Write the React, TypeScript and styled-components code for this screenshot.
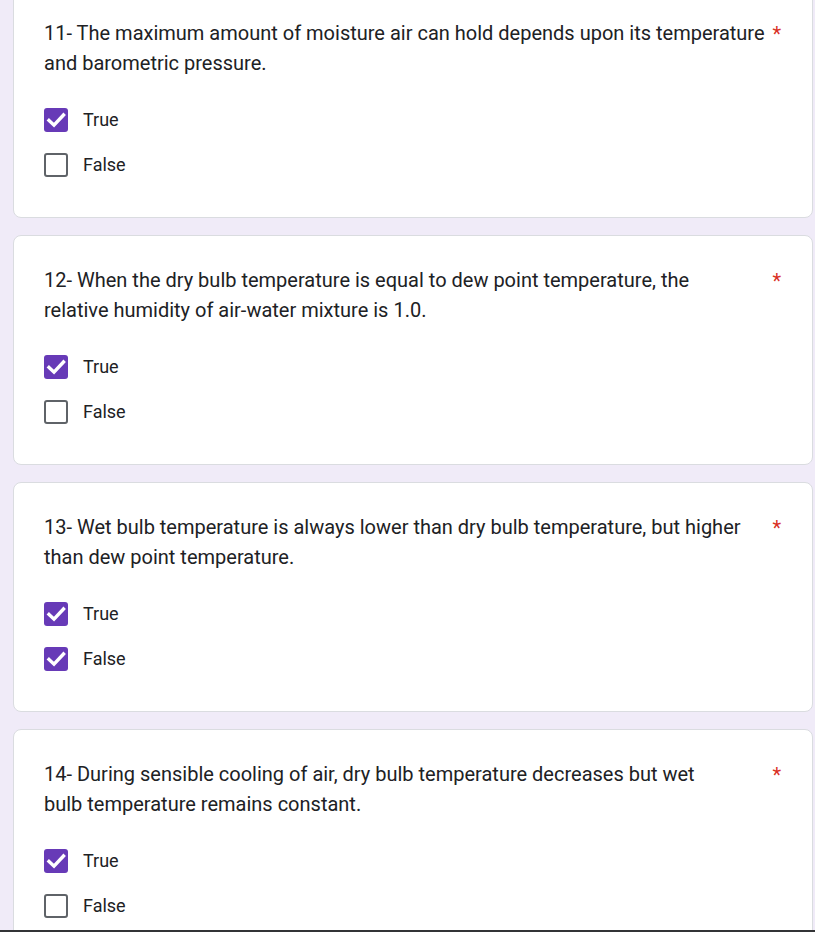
import React from 'react';
import styled, { createGlobalStyle } from 'styled-components';

const GlobalStyle = createGlobalStyle`
  html, body {
    margin: 0;
    padding: 0;
    background: #f0ebf8;
    font-family: Roboto, "Noto Sans", Arial, sans-serif;
    overflow: hidden;
  }
`;

const Page = styled.div`
  height: 932px;
  box-sizing: border-box;
  padding: 0 2px 0 13px;
  overflow: hidden;
  border-bottom: 2px solid #333436;
`;

const Stack = styled.div`
  display: flex;
  flex-direction: column;
  gap: 17px;
  margin-top: -12px;
`;

const Card = styled.div`
  background: #fff;
  border: 1px solid #dadce0;
  border-radius: 8px;
  height: 230px;
  box-sizing: border-box;
  padding: 29px 30px;
  flex-shrink: 0;
`;

const TitleRow = styled.div`
  display: flex;
  align-items: flex-start;
  justify-content: space-between;
`;

const Title = styled.div`
  font-size: 20px;
  line-height: 30px;
  color: #202124;
  white-space: nowrap;
`;

const Asterisk = styled.span`
  color: #d93025;
  font-size: 20px;
  line-height: 30px;
  padding-top: 1px;
  margin-right: 1px;
`;

const Options = styled.div`
  display: flex;
  flex-direction: column;
  margin-top: 19px;
`;

const Option = styled.label`
  display: flex;
  align-items: center;
  height: 45px;
  gap: 15px;
  font-size: 18px;
  color: #202124;
`;

const Box = styled.span<{ checked: boolean }>`
  width: 24px;
  height: 24px;
  box-sizing: border-box;
  border-radius: 3px;
  display: inline-flex;
  align-items: center;
  justify-content: center;
  background: ${({ checked }) => (checked ? '#673ab7' : '#fff')};
  border: ${({ checked }) => (checked ? 'none' : '2px solid #5f6368')};
`;

const Check = () => (
  <svg width="24" height="24" viewBox="0 0 24 24">
    <path d="M5 12.5 L10 17.2 L19.5 7" fill="none" stroke="#fff" strokeWidth="3.4" strokeLinecap="square" />
  </svg>
);

type Question = {
  lines: string[];
  answers: { label: string; checked: boolean }[];
};

const questions: Question[] = [
  {
    lines: [
      '11- The maximum amount of moisture air can hold depends upon its temperature',
      'and barometric pressure.',
    ],
    answers: [
      { label: 'True', checked: true },
      { label: 'False', checked: false },
    ],
  },
  {
    lines: [
      '12- When the dry bulb temperature is equal to dew point temperature, the',
      'relative humidity of air-water mixture is 1.0.',
    ],
    answers: [
      { label: 'True', checked: true },
      { label: 'False', checked: false },
    ],
  },
  {
    lines: [
      '13- Wet bulb temperature is always lower than dry bulb temperature, but higher',
      'than dew point temperature.',
    ],
    answers: [
      { label: 'True', checked: true },
      { label: 'False', checked: true },
    ],
  },
  {
    lines: [
      '14- During sensible cooling of air, dry bulb temperature decreases but wet',
      'bulb temperature remains constant.',
    ],
    answers: [
      { label: 'True', checked: true },
      { label: 'False', checked: false },
    ],
  },
];

export default function App() {
  return (
    <>
      <GlobalStyle />
      <Page>
        <Stack>
          {questions.map((q, i) => (
            <Card key={i}>
              <TitleRow>
                <Title>
                  {q.lines.map((l, j) => (
                    <div key={j}>{l}</div>
                  ))}
                </Title>
                <Asterisk>*</Asterisk>
              </TitleRow>
              <Options>
                {q.answers.map((a) => (
                  <Option key={a.label}>
                    <Box checked={a.checked}>{a.checked && <Check />}</Box>
                    {a.label}
                  </Option>
                ))}
              </Options>
            </Card>
          ))}
        </Stack>
      </Page>
    </>
  );
}
